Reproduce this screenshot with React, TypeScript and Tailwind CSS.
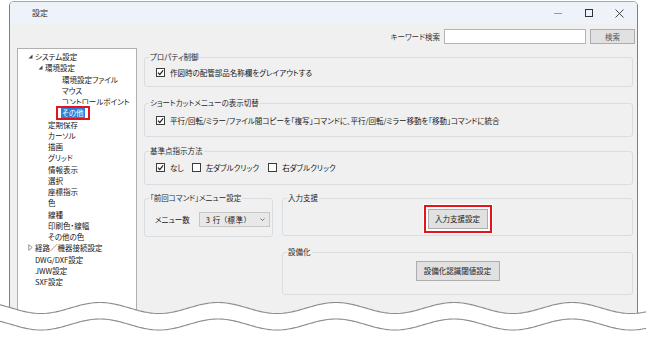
import React from "react";

type Item = { label: string; pad: string; arrow?: "open" | "closed"; selected?: boolean };

const tree: Item[] = [
  { label: "システム設定", pad: "pl-[17px]", arrow: "open" },
  { label: "環境設定", pad: "pl-[27px]", arrow: "open" },
  { label: "環境設定ファイル", pad: "pl-[44px]" },
  { label: "マウス", pad: "pl-[44px]" },
  { label: "コントロールポイント", pad: "pl-[44px]" },
  { label: "その他", pad: "pl-[43px]", selected: true },
  { label: "定期保存", pad: "pl-[30px]" },
  { label: "カーソル", pad: "pl-[30px]" },
  { label: "描画", pad: "pl-[30px]" },
  { label: "グリッド", pad: "pl-[30px]" },
  { label: "情報表示", pad: "pl-[30px]" },
  { label: "選択", pad: "pl-[30px]" },
  { label: "座標指示", pad: "pl-[30px]" },
  { label: "色", pad: "pl-[30px]" },
  { label: "線種", pad: "pl-[30px]" },
  { label: "印刷色・線幅", pad: "pl-[30px]" },
  { label: "その他の色", pad: "pl-[30px]" },
  { label: "経路／機器接続設定", pad: "pl-[17px]", arrow: "closed" },
  { label: "DWG/DXF設定", pad: "pl-[17px]" },
  { label: "JWW設定", pad: "pl-[17px]" },
  { label: "SXF設定", pad: "pl-[17px]" },
];

function Arrow({ kind }: { kind: "open" | "closed" }) {
  return (
    <span className="-ml-[7px] w-[7px] flex items-center">
      {kind === "open" ? (
        <svg width="5" height="5" viewBox="0 0 5 5">
          <path d="M4.5 0.5 L4.5 4.5 L0.5 4.5 Z" fill="#444" />
        </svg>
      ) : (
        <svg width="5" height="7" viewBox="0 0 5 7">
          <path d="M0.7 0.7 L4.2 3.5 L0.7 6.3 Z" fill="none" stroke="#8a8a8a" strokeWidth="0.9" />
        </svg>
      )}
    </span>
  );
}

function Check({ on }: { on?: boolean }) {
  return (
    <span className="w-[9px] h-[9px] border border-[#3c3c3c] bg-white flex items-center justify-center shrink-0">
      {on && (
        <svg width="7" height="7" viewBox="0 0 7 7">
          <path d="M1 3.7 L2.8 5.5 L6.1 1.3" fill="none" stroke="#1e1e1e" strokeWidth="1.2" />
        </svg>
      )}
    </span>
  );
}

function Group({ title, className, children }: { title: string; className: string; children?: React.ReactNode }) {
  return (
    <fieldset className={"border border-[#d8dde2] rounded-[3px] min-w-0 " + className}>
      <legend className="ml-[4px] px-[1px] leading-[10px] text-[#2a2a2a]">{title}</legend>
      {children}
    </fieldset>
  );
}

function Button({ label, className }: { label: string; className: string }) {
  return (
    <div className={"bg-[#e1e1e1] border border-[#adadad] flex items-center justify-center text-[#222] " + className}>
      {label}
    </div>
  );
}

function wave(c: number) {
  let d = "";
  for (let x = 0; x <= 646; x += 2) {
    const y = c - 5.5 * Math.cos((2 * Math.PI * (x - 100)) / 118);
    d += (x === 0 ? "M" : "L") + x + " " + y.toFixed(2) + " ";
  }
  return d;
}

export default function App() {
  return (
    <div className="relative w-[646px] h-[342px] bg-white overflow-hidden font-['Noto_Sans_CJK_JP','Noto_Sans',sans-serif] text-[7.5px] [font-feature-settings:'palt'] text-[#161616]">
      <div className="ml-[9px] mt-[1px] w-[629px] h-[326px] border-x border-t border-x-[#808080] border-t-[#a8a8a8] rounded-t-[5px] flex flex-col overflow-hidden">
        {/* title bar */}
        <div className="h-[22px] bg-[#eef2f9] flex items-center">
          <span className="pl-[22px] flex-1 text-[8px] text-[#333]">設定</span>
          <div className="w-[31px] h-full flex items-center justify-center">
            <span className="w-[8px] h-px bg-[#9a9a9a]" />
          </div>
          <div className="w-[31px] h-full flex items-center justify-center">
            <span className="w-[8px] h-[8px] border border-[#333]" />
          </div>
          <div className="w-[31px] h-full flex items-center justify-center">
            <svg width="9" height="9" viewBox="0 0 9 9">
              <path d="M0.5 0.5 L8.5 8.5 M8.5 0.5 L0.5 8.5" stroke="#333" strokeWidth="0.9" />
            </svg>
          </div>
          <div className="w-[2px]" />
        </div>

        {/* body */}
        <div className="flex-1 bg-[#f0f0f0] flex flex-col">
          <div className="mt-[5px] h-[15px] flex items-center justify-end pr-[2px]">
            <span className="text-[#333] mr-[4px]">キーワード検索</span>
            <div className="w-[142px] h-[15px] bg-white border border-[#b4b4b4]" />
            <Button label="検索" className="ml-[4px] w-[45px] h-[15px] !text-[#555]" />
          </div>

          <div className="mt-[4px] flex-1 flex pl-[7px] pr-[3px] gap-[7px]">
            {/* tree */}
            <div className="w-[120px] bg-white border border-[#b0b0b0] pt-[2px] flex flex-col">
              {tree.map((it) => (
                <div key={it.label} className={"h-[11.25px] flex items-center " + it.pad}>
                  {it.arrow && <Arrow kind={it.arrow} />}
                  {it.selected ? (
                    <span className="relative z-10 bg-[#2f80dc] text-white px-[1px] leading-[11px]">
                      {it.label}
                      <span className="absolute -left-[7px] -right-[7px] -top-[3px] -bottom-[4px] border-2 border-white rounded-[1px]">
                        <span className="block w-full h-full border-2 border-[#e4141c]" />
                      </span>
                    </span>
                  ) : (
                    <span>{it.label}</span>
                  )}
                </div>
              ))}
            </div>

            {/* settings */}
            <div className="w-[489px] pt-[4px] flex flex-col">
              <Group title="プロパティ制御" className="h-[35px]">
                <div className="mt-[5px] pl-[11px] flex items-center gap-[5px]">
                  <Check on />
                  <span>作図時の配管部品名称欄をグレイアウトする</span>
                </div>
              </Group>

              <Group title="ショートカットメニューの表示切替" className="h-[39px] mt-[11px]">
                <div className="mt-[7px] pl-[11px] flex items-center gap-[5px]">
                  <Check on />
                  <span>平行/回転/ミラー/ファイル間コピーを「複写」コマンドに、平行/回転/ミラー移動を「移動」コマンドに統合</span>
                </div>
              </Group>

              <Group title="基準点指示方法" className="h-[39px] mt-[9px]">
                <div className="mt-[6px] pl-[11px] flex items-center">
                  <Check on />
                  <span className="ml-[5px]">なし</span>
                  <span className="ml-[8px]"><Check /></span>
                  <span className="ml-[5px]">左ダブルクリック</span>
                  <span className="ml-[9px]"><Check /></span>
                  <span className="ml-[5px]">右ダブルクリック</span>
                </div>
              </Group>

              <div className="mt-[8px] flex gap-[9px]">
                <Group title="「前回コマンド」メニュー設定" className="w-[129px] h-[44px] shrink-0">
                  <div className="mt-[9px] pl-[10px] flex items-center">
                    <span>メニュー数</span>
                    <div className="ml-[9px] w-[71px] h-[15px] bg-[#e8e8e8] border border-[#c6c6c6] flex items-center pl-[6px] pr-[4px]">
                      <span className="flex-1 tracking-[0.6px]">3 行 （標準）</span>
                      <svg width="5" height="3" viewBox="0 0 5 3">
                        <path d="M0.5 0.5 L2.5 2.5 L4.5 0.5" fill="none" stroke="#555" strokeWidth="0.8" />
                      </svg>
                    </div>
                  </div>
                </Group>

                <div className="flex-1 flex flex-col">
                  <Group title="入力支援" className="h-[43px]">
                    <div className="mt-[1px] flex justify-center">
                      <div className="p-px bg-white">
                        <div className="border-2 border-[#e4141c] p-[2px] bg-white">
                          <Button label="入力支援設定" className="w-[60px] h-[20px]" />
                        </div>
                      </div>
                    </div>
                  </Group>

                  <Group title="設備化" className="h-[48px] mt-[11px]">
                    <div className="mt-[4px] flex justify-center">
                      <Button label="設備化認識閾値設定" className="w-[84px] h-[20px]" />
                    </div>
                  </Group>
                </div>
              </div>
            </div>
          </div>
        </div>
      </div>

      {/* torn edge */}
      <svg className="absolute left-0 top-0 pointer-events-none" width="646" height="342" viewBox="0 0 646 342">
        <path d={wave(308) + "L646 342 L0 342 Z"} fill="#ffffff" />
        <path d={wave(308)} fill="none" stroke="#8c8c8c" strokeWidth="1.1" />
        <path d={wave(324.5)} fill="none" stroke="#8c8c8c" strokeWidth="1.1" />
      </svg>
    </div>
  );
}
